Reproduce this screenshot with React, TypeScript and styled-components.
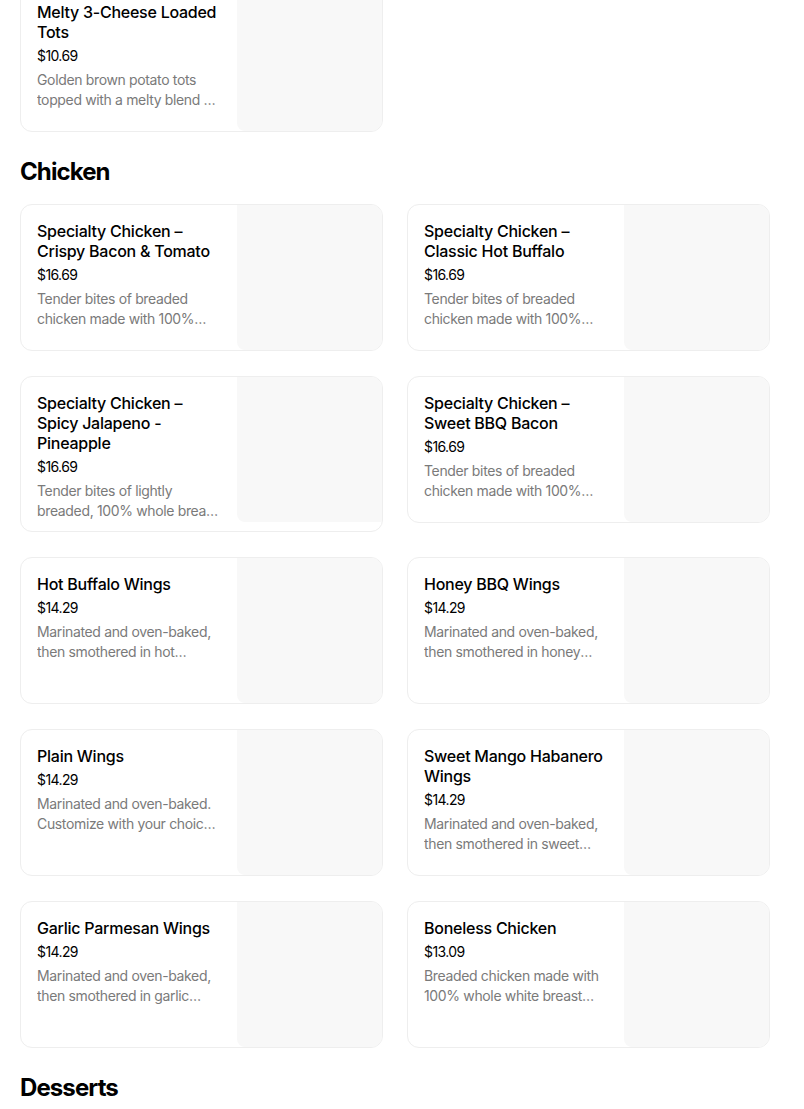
import React from 'react'
import styled, { createGlobalStyle } from 'styled-components'

const GlobalStyle = createGlobalStyle`
  body {
    margin: 0;
    background: #ffffff;
    font-family: Inter, "Noto Sans", "Liberation Sans", sans-serif;
    color: #000000;
  }
`

type Item = {
  title: string
  price: string
  description: string
}

const sides: Item[] = [
  {
    title: 'Melty 3-Cheese Loaded Tots',
    price: '$10.69',
    description: 'Golden brown potato tots topped with a melty blend of three cheeses.',
  },
]

const chicken: Item[] = [
  {
    title: 'Specialty Chicken – Crispy Bacon & Tomato',
    price: '$16.69',
    description: 'Tender bites of breaded chicken made with 100% whole breast white meat.',
  },
  {
    title: 'Specialty Chicken – Classic Hot Buffalo',
    price: '$16.69',
    description: 'Tender bites of breaded chicken made with 100% whole breast white meat.',
  },
  {
    title: 'Specialty Chicken – Spicy Jalapeno - Pineapple',
    price: '$16.69',
    description: 'Tender bites of lightly breaded, 100% whole breast white meat chicken.',
  },
  {
    title: 'Specialty Chicken – Sweet BBQ Bacon',
    price: '$16.69',
    description: 'Tender bites of breaded chicken made with 100% whole breast white meat.',
  },
  {
    title: 'Hot Buffalo Wings',
    price: '$14.29',
    description: 'Marinated and oven-baked, then smothered in hot buffalo sauce.',
  },
  {
    title: 'Honey BBQ Wings',
    price: '$14.29',
    description: 'Marinated and oven-baked, then smothered in honey BBQ sauce.',
  },
  {
    title: 'Plain Wings',
    price: '$14.29',
    description: 'Marinated and oven-baked. Customize with your choice of dipping sauce.',
  },
  {
    title: 'Sweet Mango Habanero Wings',
    price: '$14.29',
    description: 'Marinated and oven-baked, then smothered in sweet mango habanero sauce.',
  },
  {
    title: 'Garlic Parmesan Wings',
    price: '$14.29',
    description: 'Marinated and oven-baked, then smothered in garlic parmesan sauce.',
  },
  {
    title: 'Boneless Chicken',
    price: '$13.09',
    description: 'Breaded chicken made with 100% whole white breast meat.',
  },
]

const Page = styled.main`
  width: 750px;
  padding: 0 20px;
  margin-top: -15px;
  display: flex;
  flex-direction: column;
  gap: 24px;
`

const Section = styled.section`
  display: flex;
  flex-direction: column;
  gap: 16px;
`

const SectionTitle = styled.h2`
  margin: 0;
  font-size: 24px;
  line-height: 32px;
  font-weight: 700;
  letter-spacing: -0.9px;
`

const Grid = styled.ul`
  list-style: none;
  margin: 0;
  padding: 0;
  display: grid;
  grid-template-columns: 1fr 1fr;
  column-gap: 24px;
  row-gap: 25px;
  align-items: start;
`

const Card = styled.li`
  box-sizing: border-box;
  min-height: 147px;
  display: flex;
  border: 1px solid #eeeeee;
  border-radius: 12px;
  overflow: hidden;
  background: #ffffff;
`

const Info = styled.div`
  flex: 1;
  min-width: 0;
  padding: 16px 16px 10px 16px;
`

const Title = styled.div`
  font-size: 16px;
  line-height: 20px;
  font-weight: 500;
  letter-spacing: -0.25px;
  margin-bottom: 4px;
`

const Price = styled.div`
  font-size: 14px;
  line-height: 20px;
  font-weight: 400;
  letter-spacing: -0.6px;
  margin-bottom: 4px;
`

const Description = styled.div`
  font-size: 14px;
  line-height: 20px;
  font-weight: 400;
  letter-spacing: -0.35px;
  color: #7a7a7a;
  display: -webkit-box;
  -webkit-line-clamp: 2;
  -webkit-box-orient: vertical;
  overflow: hidden;
`

const Thumb = styled.div`
  flex-shrink: 0;
  width: 145px;
  height: 145px;
  background: #f8f8f8;
  border-bottom-left-radius: 8px;
`

const MenuCard = ({ item }: { item: Item }) => (
  <Card>
    <Info>
      <Title>{item.title}</Title>
      <Price>{item.price}</Price>
      <Description>{item.description}</Description>
    </Info>
    <Thumb />
  </Card>
)

const App = () => (
  <>
    <GlobalStyle />
    <Page>
      <Grid>
        {sides.map((item) => (
          <MenuCard key={item.title} item={item} />
        ))}
      </Grid>
      <Section>
        <SectionTitle>Chicken</SectionTitle>
        <Grid>
          {chicken.map((item) => (
            <MenuCard key={item.title} item={item} />
          ))}
        </Grid>
      </Section>
      <Section>
        <SectionTitle>Desserts</SectionTitle>
      </Section>
    </Page>
  </>
)

export default App
